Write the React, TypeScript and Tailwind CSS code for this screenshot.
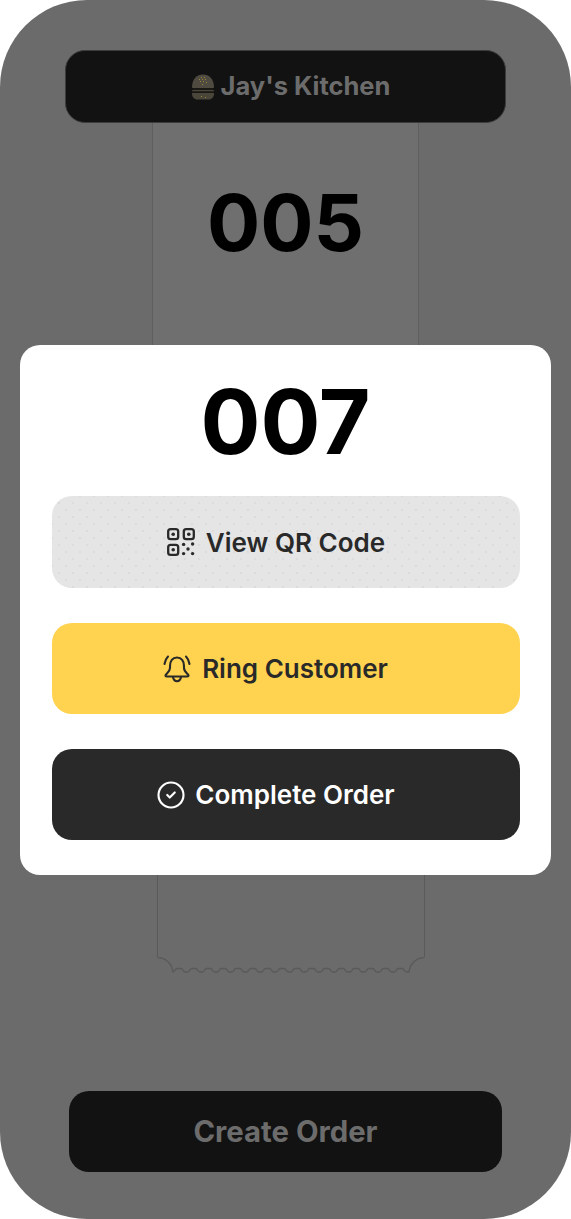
import { CircleCheck } from "lucide-react";

function QrIcon() {
  return (
    <svg width="28" height="28" viewBox="0 0 28 28" fill="none" stroke="#292929" strokeWidth="2.3" className="shrink-0">
      <rect x="1.2" y="1.2" width="10" height="10" rx="2.4" />
      <rect x="16.8" y="1.2" width="10" height="10" rx="2.4" />
      <rect x="1.2" y="16.8" width="10" height="10" rx="2.4" />
      <g fill="#292929" stroke="none">
        <circle cx="6.2" cy="6.2" r="1.8" />
        <circle cx="21.8" cy="6.2" r="1.8" />
        <circle cx="6.2" cy="21.8" r="1.8" />
        <circle cx="16.6" cy="16.4" r="1.7" />
        <circle cx="25.6" cy="16" r="1.7" />
        <circle cx="21" cy="21" r="1.7" />
        <circle cx="16.6" cy="25.6" r="1.7" />
        <circle cx="25.6" cy="25.6" r="1.7" />
      </g>
    </svg>
  );
}

function BellIcon() {
  return (
    <svg width="28" height="28" viewBox="0 0 28 28" fill="none" stroke="#292929" strokeWidth="2.1" strokeLinecap="round" strokeLinejoin="round" className="shrink-0">
      <path d="M14 2.500C9.500 2.500 7 6 7 11v2c0 3-2 4.500-4 6.500-1 1.200-.5 2 1 2h20c1.500 0 2-.8 1-2-2-2-4-3.500-4-6.500v-2c0-5-2.500-8.500-7-8.500Z" />
      <path d="M10 22c.5 3 2 4.200 4 4.200s3.500-1.200 4-4.200" />
      <path d="M1.500 9c.5-3 1.500-5.500 3.500-7.500" />
      <path d="M26.500 9c-.5-3-1.500-5.500-3.500-7.500" />
    </svg>
  );
}

function Burger() {
  return (
    <svg width="24" height="26" viewBox="0 0 24 26" className="shrink-0">
      <path d="M1 13C1 5 6 .5 12 .5S23 5 23 13c0 .8-.5 1-1 1H2c-.5 0-1-.2-1-1Z" fill="#4f4b40" />
      <rect x="2" y="14" width="20" height="2" fill="#1a1814" />
      <rect x="1" y="16" width="22" height="1.500" rx=".75" fill="#4a463a" />
      <rect x="2" y="17.500" width="20" height="1.500" fill="#1a1814" />
      <path d="M1 19h22v1c0 3-2.500 5.500-5 5.500H6C3.500 25.500 1 23 1 20Z" fill="#4a463a" />
      <g fill="#9a8436">
        <rect x="10" y="3" width="1" height="1" />
        <rect x="13" y="3" width="1" height="1" />
        <rect x="8" y="5" width="1" height="1" />
        <rect x="11" y="5" width="1" height="1" />
        <rect x="14" y="5" width="1" height="1" />
        <rect x="9" y="7" width="1" height="1" />
        <rect x="12" y="7" width="1" height="1" />
        <rect x="15" y="8" width="1" height="1" />
        <rect x="11" y="10" width="1" height="1" />
        <rect x="10" y="22" width="1" height="1" />
        <rect x="14" y="23" width="1" height="1" />
      </g>
    </svg>
  );
}

// scalloped bottom edge of the ticket behind the modal
function TicketEdge() {
  const scallops = Array.from({ length: 16 }, () => "c2 0 2-3.500 4-3.500h4c2 0 2 3.500 4 3.500h2.750").join(" ");
  return (
    <svg width="268" height="20" viewBox="0 0 268 20" className="block" fill="none" stroke="#5a5a5a" strokeWidth="1.500">
      <path d={`M0.500 0.500C9 0.500 15 7 16 15 ${scallops} C253 7 259 0.500 267.500 0.500`} />
    </svg>
  );
}

export default function App() {
  return (
    <div className="relative flex h-[1219px] w-[571px] flex-col overflow-hidden rounded-[87px] bg-[#6b6b6b] font-['Inter',sans-serif]">
      <header className="mx-[65px] mt-[50px] flex h-[73px] items-center justify-center gap-[6px] rounded-[20px] border border-[#3c3c3c] bg-[#121212] pl-[10px]">
        <Burger />
        <span className="text-[25.5px] font-bold text-[#6c6c6c]">Jay's Kitchen</span>
      </header>

      <div className="ml-[152px] h-[222px] w-[267px] border-x border-[#5f5f5f] bg-[#6f6f6f] pt-[51px] text-center text-[79px] leading-[96px] font-bold text-black">
        005
      </div>

      <div className="mt-[530px] ml-[157px] w-[268px]">
        <div className="h-[82px] border-x-[1.5px] border-[#5a5a5a] bg-[#6b6b6b]" />
        <TicketEdge />
      </div>

      <button className="mx-[69px] mt-auto mb-[47px] h-[81px] rounded-[20px] bg-[#121212] text-[29.3px] font-bold text-[#6c6c6c]">
        Create Order
      </button>

      {/* order modal over the dimmed page */}
      <div className="absolute top-[345px] left-[20px] flex h-[530px] w-[531px] flex-col rounded-[20px] bg-white px-[31.5px]">
        <div className="mt-[23px] text-center text-[89px] leading-[107px] font-bold text-black">007</div>
        <div className="mt-[21px] flex flex-col gap-[35px]">
          <button className="flex h-[92px] items-center justify-center gap-[11px] rounded-[20px] bg-[#e5e5e5] bg-[radial-gradient(circle,#dcdcdc_0.7px,transparent_1px),radial-gradient(circle,#dcdcdc_0.7px,transparent_1px)] bg-[length:14px_14px] bg-[position:0_0,7px_7px] pr-[19px] text-[26px] font-semibold text-[#292929]">
            <QrIcon />
            View QR Code
          </button>
          <button className="flex h-[91px] items-center justify-center gap-[11px] rounded-[20px] bg-[#ffd34f] pr-[20px] text-[26px] font-semibold text-[#292929]">
            <BellIcon />
            Ring Customer
          </button>
          <button className="flex h-[91px] items-center justify-center gap-[9px] rounded-[20px] bg-[#292929] pr-[20px] text-[26px] font-semibold text-white">
            <CircleCheck size={30} strokeWidth={1.7} />
            Complete Order
          </button>
        </div>
      </div>
    </div>
  );
}
